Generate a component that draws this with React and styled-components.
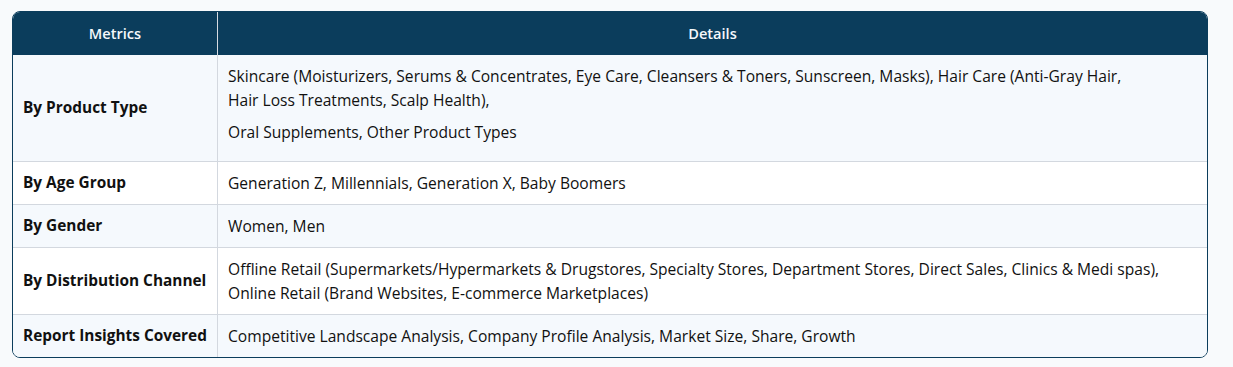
import styled, { createGlobalStyle } from "styled-components";

const GlobalStyle = createGlobalStyle`
    body {
        margin: 0;
        background: #f8fafc;
        font-family: "Open Sans", Lato, sans-serif;
        color: #111;
    }
`;

const Page = styled.div`
    padding: 11px 25px 0 12px;
`;

const Frame = styled.div`
    border: 1px solid #0b3d5c;
    border-radius: 8px;
    overflow: hidden;
    background: #fff;
`;

const Table = styled.table`
    width: 100%;
    border-collapse: separate;
    border-spacing: 0;
    font-size: 15.6px;
    line-height: 24px;
`;

const Head = styled.th`
    background: #0b3d5c;
    color: #f4f8fb;
    font-weight: 600;
    font-size: 14.6px;
    text-align: center;
    padding: 9px 10px 10px;
    width: ${({ $w }) => $w || "auto"};

    & + & {
        border-left: 1px solid #d6dbe2;
    }
`;

const Row = styled.tr`
    background: ${({ $shade }) => ($shade ? "#f5f9fd" : "#fff")};

    td {
        border-bottom: 1px solid #d3d8df;
    }

    &:last-child td {
        border-bottom: none;
    }
`;

const Label = styled.td`
    font-weight: 700;
    font-size: 15.4px;
    padding: 9px 10px;
    white-space: nowrap;
    vertical-align: middle;
`;

const Detail = styled.td`
    padding: 9px 30px 9px 10px;
    border-left: 1px solid #d3d8df;
    vertical-align: middle;

    p {
        margin: 0 0 8px;
    }
`;

const rows = [
    {
        label: "By Product Type",
        parts: [
            "Skincare (Moisturizers, Serums & Concentrates, Eye Care, Cleansers & Toners, Sunscreen, Masks), Hair Care (Anti-Gray Hair, Hair\u00a0Loss Treatments, Scalp Health),",
            "Oral Supplements, Other Product Types",
        ],
    },
    { label: "By Age Group", text: "Generation Z, Millennials, Generation X, Baby Boomers" },
    { label: "By Gender", text: "Women, Men" },
    {
        label: "By Distribution Channel",
        text: "Offline Retail (Supermarkets/Hypermarkets & Drugstores, Specialty Stores, Department Stores, Direct Sales, Clinics & Medi spas), Online Retail (Brand Websites, E-commerce Marketplaces)",
    },
    {
        label: "Report Insights Covered",
        text: "Competitive Landscape Analysis, Company Profile Analysis, Market Size, Share, Growth",
    },
];

export default function App() {
    return (
        <Page>
            <GlobalStyle />
            <Frame>
                <Table>
                    <thead>
                        <tr>
                            <Head $w="184px">Metrics</Head>
                            <Head>Details</Head>
                        </tr>
                    </thead>
                    <tbody>
                        {rows.map((r, i) => (
                            <Row key={r.label} $shade={i % 2 === 0}>
                                <Label>{r.label}</Label>
                                <Detail>
                                    {r.parts ? r.parts.map((p) => <p key={p}>{p}</p>) : r.text}
                                </Detail>
                            </Row>
                        ))}
                    </tbody>
                </Table>
            </Frame>
        </Page>
    );
}
